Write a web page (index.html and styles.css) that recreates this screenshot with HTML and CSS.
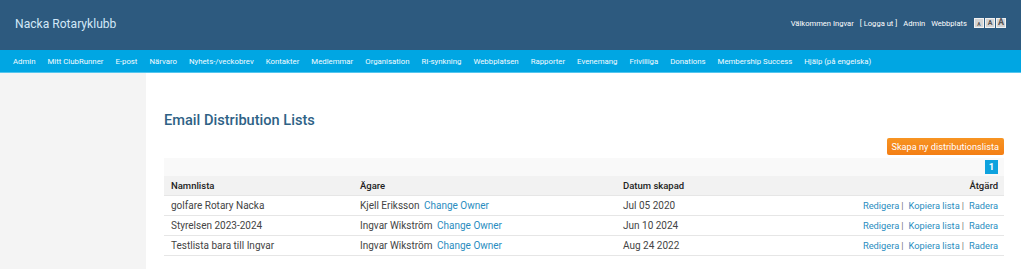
FILE: index.html
```html
<!DOCTYPE html>
<html lang="sv">
<head>
    <meta charset="UTF-8">
    <meta name="viewport" content="width=device-width, initial-scale=1.0">
    <title>Email Distribution Lists</title>
    <link rel="stylesheet" href="styles.css">
</head>
<body>
<div class="page">
    <header class="topbar">
        <div class="club-name">Nacka Rotaryklubb</div>
        <div class="user-links">
            <span>Välkommen Ingvar</span>
            <a href="#">[ Logga ut ]</a>
            <a href="#">Admin</a>
            <a href="#">Webbplats</a>
            <span class="font-sizes">
                <span class="fs fs-small">A</span>
                <span class="fs fs-mid">A</span>
                <span class="fs fs-big">A</span>
            </span>
        </div>
    </header>

    <nav class="mainnav">
        <a href="#">Admin</a>
        <a href="#">Mitt ClubRunner</a>
        <a href="#">E-post</a>
        <a href="#">Närvaro</a>
        <a href="#">Nyhets-/veckobrev</a>
        <a href="#">Kontakter</a>
        <a href="#">Medlemmar</a>
        <a href="#">Organisation</a>
        <a href="#">RI-synkning</a>
        <a href="#">Webbplatsen</a>
        <a href="#">Rapporter</a>
        <a href="#">Evenemang</a>
        <a href="#">Frivilliga</a>
        <a href="#">Donations</a>
        <a href="#">Membership Success</a>
        <a href="#">Hjälp (på engelska)</a>
    </nav>

    <div class="layout">
        <aside class="sidebar"></aside>
        <main class="content">
            <h1>Email Distribution Lists</h1>
            <div class="toolbar">
                <button type="button" class="btn-create">Skapa ny distributionslista</button>
            </div>
            <table class="list-table">
                <thead>
                    <tr class="pager-row">
                        <td colspan="4"><span class="page-num">1</span></td>
                    </tr>
                    <tr class="head-row">
                        <th class="col-name">Namnlista</th>
                        <th class="col-owner">Ägare</th>
                        <th>Datum skapad</th>
                        <th class="col-action">Åtgärd</th>
                    </tr>
                </thead>
                <tbody>
                    <tr>
                        <td>golfare Rotary Nacka</td>
                        <td>Kjell Eriksson <a href="#" class="owner-link">Change Owner</a></td>
                        <td>Jul 05 2020</td>
                        <td class="col-action"><a href="#">Redigera</a><span class="sep">|</span><a href="#">Kopiera lista</a><span class="sep">|</span><a href="#">Radera</a></td>
                    </tr>
                    <tr>
                        <td>Styrelsen 2023-2024</td>
                        <td>Ingvar Wikström <a href="#" class="owner-link">Change Owner</a></td>
                        <td>Jun 10 2024</td>
                        <td class="col-action"><a href="#">Redigera</a><span class="sep">|</span><a href="#">Kopiera lista</a><span class="sep">|</span><a href="#">Radera</a></td>
                    </tr>
                    <tr>
                        <td>Testlista bara till Ingvar</td>
                        <td>Ingvar Wikström <a href="#" class="owner-link">Change Owner</a></td>
                        <td>Aug 24 2022</td>
                        <td class="col-action"><a href="#">Redigera</a><span class="sep">|</span><a href="#">Kopiera lista</a><span class="sep">|</span><a href="#">Radera</a></td>
                    </tr>
                </tbody>
            </table>
        </main>
    </div>
</div>
</body>
</html>
```

FILE: styles.css
```css
body {
    margin: 0;
    font-family: Roboto, "Liberation Sans", Arial, sans-serif;
    color: #444;
    background: #fff;
}
a {
    text-decoration: none;
}
.page {
    margin-right: 3px;
}

/* header */
.topbar {
    height: 50px;
    background-color: #2d5a7f;
    display: flex;
    align-items: center;
    justify-content: space-between;
    padding: 0 15px 0 15px;
}
.club-name {
    color: #d2e8f8;
    font-size: 12.1px;
    margin-top: -3px;
}
.user-links {
    display: flex;
    align-items: center;
    font-size: 7.6px;
    color: #fff;
    margin-top: -4px;
}
.user-links a {
    color: #fff;
    margin-left: 6px;
}
.font-sizes {
    display: flex;
    gap: 1px;
    margin-left: 7px;
}
.fs {
    width: 8px;
    height: 8px;
    border: 1px solid #f2f2f2;
    background: #d4d4d4;
    color: #555;
    display: flex;
    align-items: flex-end;
    justify-content: center;
    line-height: 1;
    font-weight: bold;
}
.fs-small { font-size: 5px; }
.fs-mid { font-size: 7px; }
.fs-big { font-size: 9px; }

/* main navigation */
.mainnav {
    height: 22px;
    background-color: #00a6e3;
    border-bottom: 1px solid #55c6ee;
    display: flex;
    align-items: center;
    padding-left: 7px;
}
.mainnav a {
    color: #f4fbff;
    font-size: 7.8px;
    font-weight: 400;
    padding: 0 6px;
}

/* layout */
.layout {
    display: flex;
    min-height: 196px;
}
.sidebar {
    width: 146px;
    background-color: #f4f4f4;
    flex-shrink: 0;
}
.content {
    flex: 1;
    padding: 0 17px 0 18px;
}
.content h1 {
    margin: 38px 0 0 0;
    font-size: 14.6px;
    font-weight: 500;
    color: #2e6286;
    line-height: 18px;
}
.toolbar {
    display: flex;
    justify-content: flex-end;
    margin-top: 9px;
}
.btn-create {
    font-family: inherit;
    font-size: 9.2px;
    color: #fff;
    background: linear-gradient(#f79422, #f47e14);
    border: none;
    border-radius: 2px;
    height: 17px;
    padding: 0 5px;
    cursor: pointer;
}

/* table */
.list-table {
    width: 100%;
    border-collapse: collapse;
    margin-top: 3px;
    font-size: 10px;
}
.list-table td,
.list-table th {
    text-align: left;
    padding: 0 6px 0 7px;
    height: 19px;
    border-bottom: 1px solid #e6e6e6;
}
.pager-row td {
    background-color: #f9f9f9;
    text-align: right;
    height: 18px;
    border-bottom: none;
    padding-right: 6px;
}
.page-num {
    display: inline-block;
    width: 13px;
    height: 14px;
    line-height: 14px;
    text-align: center;
    background: #0ea2de;
    color: #fff;
    font-weight: bold;
    font-size: 9.5px;
    vertical-align: middle;
}
.head-row th {
    background-color: #f2f2f2;
    color: #222;
    font-weight: 500;
    font-size: 9.5px;
    height: 19px;
}
.col-name { width: 176px; }
.col-owner { width: 250px; }
.list-table .col-action {
    text-align: right;
}
.list-table td.col-action {
    font-size: 9.3px;
}
.sep {
    color: #777;
    margin: 0 5px 0 2px;
}
.list-table td a {
    color: #2a8dc0;
}
.owner-link {
    margin-left: 2px;
}
```
